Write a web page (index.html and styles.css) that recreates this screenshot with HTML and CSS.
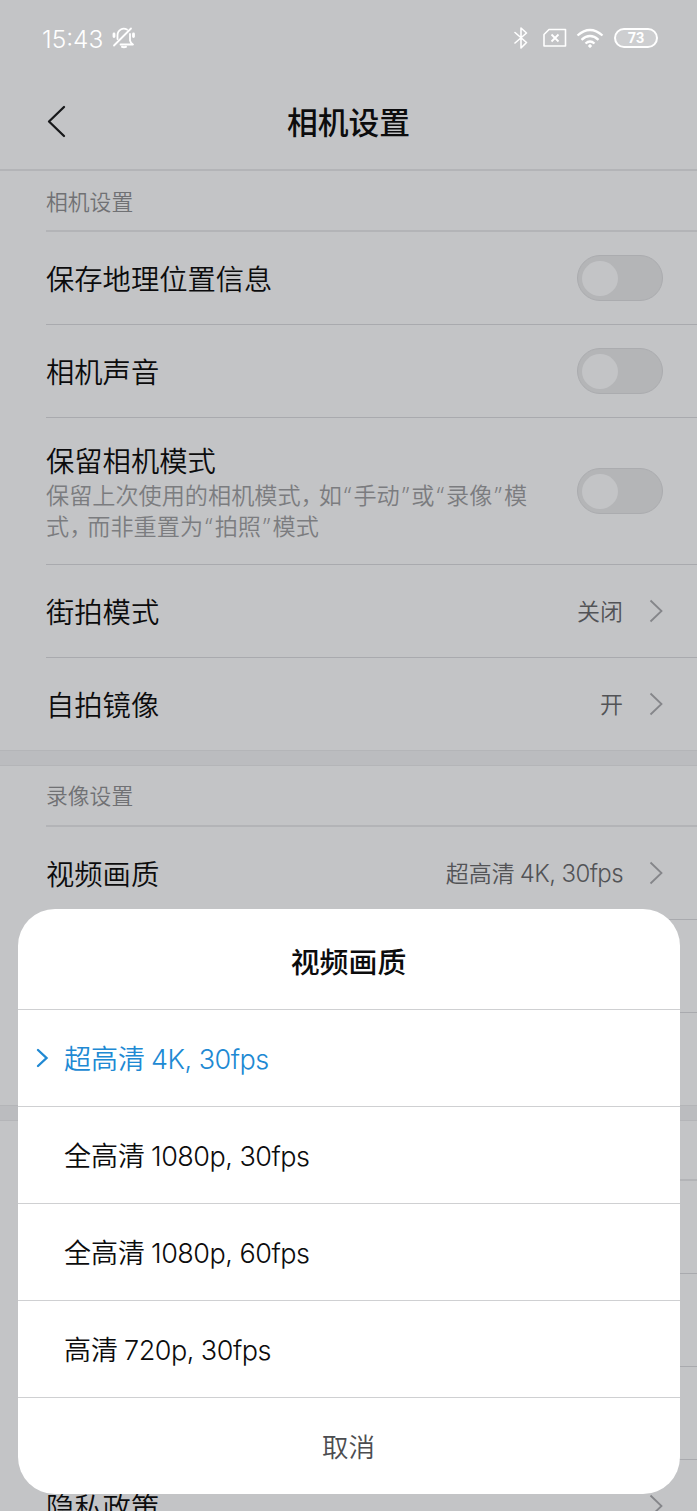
FILE: index.html
```html
<!DOCTYPE html>
<html lang="zh-CN">
<head>
<meta charset="utf-8">
<title>相机设置</title>
<link rel="stylesheet" href="styles.css">
</head>
<body>
<div class="phone">
  <div class="status">
    <span class="clock">15:43</span>
    <svg class="bell" width="26" height="24" viewBox="0 0 26 24" fill="none" stroke="#fff" stroke-width="1.8" stroke-linecap="round" stroke-linejoin="round">
      <path d="M6.500 13V9.500C6.500 3.500 12 1.500 16 3.500M19 8v6.500q.5 2.500 3 4H9.500M3 19.500 20 2.500"/>
      <path d="M3 8v2.500M22.500 8v2.500" stroke-width="2.800"/>
      <path d="M11 20.800q2 .8 4 0" stroke-width="2"/>
    </svg>
    <div class="indicators">
      <svg class="bt" width="14" height="24" viewBox="0 0 14 24" fill="none" stroke="#fff" stroke-width="1.600" stroke-linejoin="round" stroke-linecap="round"><path d="M1 6.500 12.500 16.500 7 22V2l5.500 5L1 17"/></svg>
      <svg class="sim" width="24" height="20" viewBox="0 0 24 20" fill="none" stroke="#fff" stroke-width="1.600" stroke-linejoin="round"><path d="M6 1.500H22.500V18H1V6.500Z"/><path d="m8.500 6.500 7 7m0-7-7 7" stroke-width="1.800"/></svg>
      <svg class="wifi" width="28" height="22" viewBox="0 0 28 22" fill="none" stroke="#fff" stroke-width="2.300"><path d="M1.500 8.500q12.500-11 25 0M5.500 12.800q8.500-7.500 17 0M9.500 16.500q4.500-4 9 0"/><circle cx="14" cy="19" r="1.300" fill="#fff" stroke-width="1"/></svg>
      <span class="battery">73</span>
    </div>
  </div>
  <header class="header">
    <svg class="back" width="20" height="34" viewBox="0 0 20 34" fill="none" stroke="#17181a" stroke-width="2.300" stroke-linecap="round" stroke-linejoin="round"><path d="M17 3 2 17.500 17 32"/></svg>
    <h1 class="title">相机设置</h1>
  </header>
  <main class="list">
    <div class="section first">相机设置</div>
    <div class="row"><span class="name">保存地理位置信息</span><span class="toggle"></span></div>
    <div class="row"><span class="name">相机声音</span><span class="toggle"></span></div>
    <div class="row tall">
      <div class="copy"><div>保留相机模式</div><p class="desc">保留上次使用的相机模式<span class="comma">，</span>如<span class="quote">“</span>手动<span class="quote">”</span>或<span class="quote">“</span>录像<span class="quote">”</span>模<br>式<span class="comma">，</span>而非重置为<span class="quote">“</span>拍照<span class="quote">”</span>模式</p></div>
      <span class="toggle"></span>
    </div>
    <div class="row"><span class="name">街拍模式</span><span class="value">关闭</span><svg class="chev" width="14" height="24" viewBox="0 0 14 24"><path d="M1.500 1.500 12.500 12 1.500 22.500"/></svg></div>
    <div class="row last"><span class="name">自拍镜像</span><span class="value">开</span><svg class="chev" width="14" height="24" viewBox="0 0 14 24"><path d="M1.500 1.500 12.500 12 1.500 22.500"/></svg></div>
    <div class="band"></div>
    <div class="section">录像设置</div>
    <div class="row"><span class="name">视频画质</span><span class="value">超高清 <span class="latin">4K, 30fps</span></span><svg class="chev" width="14" height="24" viewBox="0 0 14 24"><path d="M1.500 1.500 12.500 12 1.500 22.500"/></svg></div>
    <div class="row"></div>
    <div class="row last"></div>
    <div class="band"></div>
    <div class="section short"></div>
    <div class="row"></div>
    <div class="row"></div>
    <div class="row"></div>
    <div class="row"><span class="name">隐私政策</span><svg class="chev end" width="14" height="24" viewBox="0 0 14 24"><path d="M1.500 1.500 12.500 12 1.500 22.500"/></svg></div>
  </main>
  <section class="sheet">
    <h2 class="sheet-title">视频画质</h2>
    <div class="option selected"><svg class="mark" width="13" height="20" viewBox="0 0 13 20"><path d="M2 2 10.500 10 2 18"/></svg>超高清 <span class="latin">4K, 30fps</span></div>
    <div class="option">全高清 <span class="latin">1080p, 30fps</span></div>
    <div class="option">全高清 <span class="latin">1080p, 60fps</span></div>
    <div class="option">高清 <span class="latin">720p, 30fps</span></div>
    <div class="cancel">取消</div>
  </section>
</div>
</body>
</html>
```
FILE: styles.css
```css
* { box-sizing: border-box; }
body { margin: 0; }
.phone {
  position: relative;
  width: 697px;
  height: 1511px;
  overflow: hidden;
  background: #c3c4c6;
  color: #0c0c0d;
  font-family: "Noto Sans CJK SC", sans-serif;
  font-weight: 350;
}
.status {
  display: flex;
  align-items: center;
  height: 76px;
  padding: 0 39px 0 42px;
  color: #fff;
}
.clock { margin-top: 2px; font: 350 24.5px/30px Inter, sans-serif; }
.bell { margin-left: 8px; }
.indicators { display: flex; align-items: center; margin-left: auto; }
.sim { margin-left: 15px; }
.wifi { margin-left: 9px; }
.battery {
  width: 44px;
  height: 20px;
  margin-left: 10px;
  border: 2px solid #fff;
  border-radius: 10px;
  background: #cdced0;
  font: 700 14.5px/17px Roboto, sans-serif;
  text-align: center;
}
.header {
  display: grid;
  grid-template-columns: 67px 1fr 67px;
  align-items: center;
  height: 95px;
  padding-bottom: 4px;
  border-bottom: 2px solid #b3b4b7;
}
.back { justify-self: end; }
.title { margin: 0; font-size: 30.8px; font-weight: 500; line-height: 40px; text-align: center; }
.section {
  display: flex;
  align-items: center;
  height: 61px;
  margin-left: 46px;
  padding-bottom: 2px;
  border-bottom: 2px solid #b3b4b7;
  color: #707174;
  font-size: 21.8px;
}
.section.first { padding-bottom: 0; }
.section.short { height: 60px; }
.row {
  display: flex;
  align-items: center;
  height: 93px;
  margin-left: 46px;
  padding-right: 34px;
  border-bottom: 1px solid #a9aaae;
  font-size: 28.3px;
}
.name { padding-bottom: 2px; }
.row.last { height: 92px; border-bottom: 0; }
.row.tall { height: 147px; }
.copy { padding-bottom: 2px; line-height: 40px; }
.desc { margin: -1px 0 0; color: #7b7c7f; font-size: 23.15px; line-height: 31px; white-space: nowrap; }
.quote { display: inline-block; width: 11.6px; font-family: "Noto Sans", sans-serif; line-height: 0; text-align: center; }
.comma { letter-spacing: -5px; }
.toggle {
  flex: none;
  width: 86px;
  height: 46px;
  margin-left: auto;
  padding: 5px 4px;
  border: 1px solid #abacaf;
  border-radius: 23px;
  background: #b4b5b7;
}
.toggle::before {
  content: "";
  display: block;
  width: 36px;
  height: 35px;
  border-radius: 50%;
  background: #c3c4c6;
}
.value { margin-left: auto; padding-bottom: 2px; color: #525356; font-size: 23px; }
.chev { margin-left: 26px; fill: none; stroke: #85868a; stroke-width: 1.8; }
.chev.end { margin-left: auto; }
.band { height: 16px; border: solid #b4b5b8; border-width: 1px 0; background: #bbbcbf; }
.latin { font-family: Inter, sans-serif; font-weight: 300; letter-spacing: -0.5px; }
.value .latin { font-size: 24px; letter-spacing: -0.6px; }
.sheet {
  position: absolute;
  left: 17.5px;
  top: 909px;
  width: 662px;
  height: 585px;
  border-radius: 37px;
  background: #fff;
}
.sheet-title {
  height: 101px;
  margin: 0;
  padding-top: 3px;
  border-bottom: 1px solid #cfd0d2;
  font-size: 28.9px;
  font-weight: 500;
  line-height: 96px;
  text-align: center;
}
.option {
  position: relative;
  height: 97px;
  padding-left: 46.5px;
  border-bottom: 1px solid #cfd0d2;
  font-size: 27px;
  line-height: 96px;
  white-space: nowrap;
}
.selected { color: #2089d3; }
.mark { position: absolute; left: 18px; top: 38px; fill: none; stroke: #2089d3; stroke-width: 2.4; stroke-linecap: round; }
.cancel { color: #4c4d50; font-size: 26.5px; line-height: 96px; text-align: center; }
```
